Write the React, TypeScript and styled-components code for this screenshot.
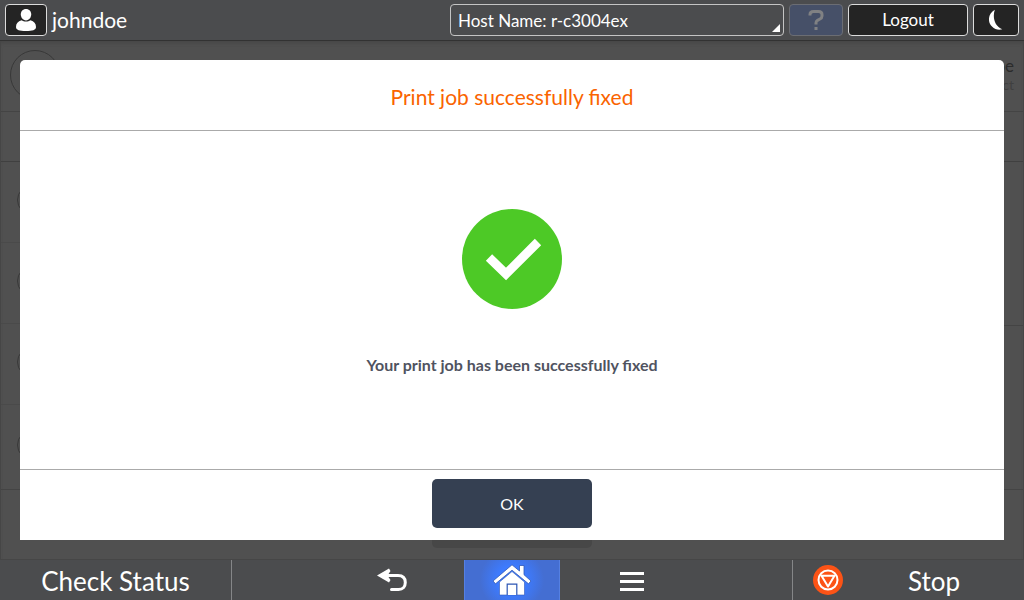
import React from 'react';
import styled, { createGlobalStyle } from 'styled-components';

const GlobalStyle = createGlobalStyle`
  *, *::before, *::after { box-sizing: border-box; }
  body {
    margin: 0;
    background: #4b4c4e;
    color: #fff;
    font-family: Lato, 'Open Sans', sans-serif;
  }
  button, select { font-family: inherit; margin: 0; }
  h1, p { margin: 0; font-weight: 400; }
`;

const Screen = styled.div`
  display: flex;
  flex-direction: column;
  min-height: 100vh;
`;

const TopBar = styled.header`
  display: flex;
  align-items: center;
  gap: 5px;
  height: 41px;
  padding: 0 5px;
  background: #4b4c4e;
  border-bottom: 1px solid #323232;
`;

const BarButton = styled.button<{ $width: number; $muted?: boolean }>`
  display: flex;
  align-items: center;
  justify-content: center;
  flex: none;
  width: ${(p) => p.$width}px;
  height: 32px;
  padding: 0;
  border: 1px solid ${(p) => (p.$muted ? '#6b6d73' : '#dcdcdc')};
  border-radius: 4px;
  background: ${(p) => (p.$muted ? '#465068' : '#242424')};
  color: #fff;
  font-size: 17px;
  line-height: 24px;
`;

const UserName = styled.span`
  flex: 1;
  font-size: 21px;
  line-height: 32px;
`;

const HostField = styled.label`
  position: relative;
  flex: none;
  width: 334px;

  &::after {
    content: '';
    position: absolute;
    right: 4px;
    bottom: 4px;
    border-style: solid;
    border-width: 0 0 8px 8px;
    border-color: transparent transparent #fff transparent;
    pointer-events: none;
  }
`;

const HostSelect = styled.select`
  display: block;
  appearance: none;
  width: 100%;
  height: 32px;
  padding: 0 7px;
  border: 1px solid #c4c4c4;
  border-radius: 4px;
  background: transparent;
  color: #fff;
  font-size: 17px;
`;

const Stage = styled.main`
  position: relative;
  display: flex;
  flex-direction: column;
  flex: 1;
  background: #505050;
  border: 1px solid #464646;
  border-top: 0;
  box-shadow: inset 0 4px 4px -2px #464646;
`;

const ProfileRow = styled.div`
  display: flex;
  justify-content: space-between;
  align-items: flex-start;
  height: 71px;
  padding: 9px;
  border-bottom: 1px solid #444;
`;

const Ring = styled.span<{ $size: number }>`
  width: ${(p) => p.$size}px;
  height: ${(p) => p.$size}px;
  border: 1px solid #383838;
  border-radius: 50%;
`;

const ProfileText = styled.div`
  display: flex;
  flex-direction: column;
  align-items: flex-end;
  padding-top: 6px;
`;

const ProfileName = styled.span`
  color: #2b2b2b;
  font-size: 17px;
  line-height: 20px;
`;

const ProfileNote = styled.span`
  color: #404040;
  font-size: 14px;
  line-height: 18px;
`;

const TabsRow = styled.div`
  height: 50px;
  border-bottom: 1px solid #404040;
`;

const Columns = styled.div`
  display: grid;
  grid-template-columns: 1fr 1fr;
  flex: 1;
  border-bottom: 1px solid #444;
`;

const Column = styled.div`
  display: flex;
  flex-direction: column;
`;

const JobRow = styled.div`
  display: flex;
  align-items: center;
  height: 81px;
  padding: 0 0 4px 16px;
  border-bottom: 1px solid #4a4a4a;

  &:last-child {
    flex: 1;
    border-bottom: 0;
  }
`;

const Detail = styled.div`
  flex: 1;

  & + & { border-top: 1px solid #444; }
`;

const ActionRow = styled.div`
  display: flex;
  justify-content: center;
  height: 69px;
  padding-top: 9px;
`;

const ActionSlot = styled.div`
  width: 160px;
  height: 49px;
  border-radius: 5px;
  background: #474747;
`;

const Dialog = styled.section`
  position: absolute;
  inset: 19px;
  display: flex;
  flex-direction: column;
  border-radius: 5px 5px 0 0;
  background: #fff;
`;

const DialogTitle = styled.h1`
  padding: 21px 20px 17px;
  border-bottom: 1px solid #aaa;
  color: #fa6400;
  font-size: 21px;
  line-height: 32px;
  text-align: center;
`;

const DialogBody = styled.div`
  display: flex;
  flex-direction: column;
  align-items: center;
  justify-content: center;
  gap: 44px;
  flex: 1;
  padding-bottom: 15px;
`;

const Message = styled.p`
  color: #50535f;
  font-size: 16px;
  font-weight: 700;
  line-height: 24px;
`;

const DialogFooter = styled.div`
  display: flex;
  justify-content: center;
  padding: 9px 20px 12px;
  border-top: 1px solid #aaa;
`;

const OkButton = styled.button`
  width: 160px;
  height: 49px;
  padding: 0;
  border: 0;
  border-radius: 5px;
  background: #354052;
  color: #fff;
  font-size: 16px;
`;

const BottomBar = styled.nav`
  display: flex;
  height: 40px;
  background: #4b4c4e;
`;

const SideButton = styled.button<{ $edge: 'left' | 'right' }>`
  display: flex;
  align-items: center;
  justify-content: ${(p) => (p.$edge === 'left' ? 'center' : 'space-between')};
  flex: none;
  width: 232px;
  padding: ${(p) => (p.$edge === 'left' ? '0' : '0 64px 0 20px')};
  border: 0 solid #858688;
  border-width: ${(p) => (p.$edge === 'left' ? '0 1px 0 0' : '0 0 0 1px')};
  background: transparent;
  color: #fff;
  font-size: 26px;
  line-height: 36px;
  white-space: nowrap;
`;

const SideLabel = styled.span`
  padding-top: 2px;
`;

const NavGroup = styled.div`
  display: flex;
  justify-content: center;
  flex: 1;
`;

const NavButton = styled.button<{ $active?: boolean }>`
  display: flex;
  align-items: center;
  justify-content: center;
  flex: ${(p) => (p.$active ? '0 0 96px' : '0 0 144px')};
  padding: 0;
  border: 0 solid #5580e2;
  border-width: ${(p) => (p.$active ? '0 1px' : '0')};
  background: ${(p) =>
    p.$active ? 'radial-gradient(circle, #3d7bff 14px, #446ed2 32px)' : 'transparent'};
`;

const UserIcon = () => (
  <svg width="22" height="24" viewBox="0 0 22 24" fill="#fff" aria-hidden="true">
    <path d="M11 1C7.800 1 5.800 3.300 5.800 6.300C5.800 9.600 7.900 12.400 11 12.400C14.100 12.400 16.200 9.600 16.200 6.300C16.200 3.300 14.200 1 11 1Z" />
    <path d="M6.500 12.200C3 13 1 15.500 1 19C1 22 4.500 23 11 23C17.500 23 21 22 21 19C21 15.500 19 13 15.500 12.200C13 14 9 14 6.500 12.200Z" />
  </svg>
);

const HelpIcon = () => (
  <svg width="18" height="22" viewBox="0 0 18 22" fill="none" stroke="#808183" strokeWidth="3" aria-hidden="true">
    <path d="M3 6.500V5.500Q3 2.500 6.500 2.500H11.500Q15 2.500 15 5.500V7Q15 9 13 10L10.500 11.300Q9 12.200 9 14V15.500M9 18V21" />
  </svg>
);

const MoonIcon = () => (
  <svg width="14" height="22" viewBox="0 0 14 22" fill="#fff" aria-hidden="true">
    <path d="M5.800 .800C-1 4.500-1.800 13 3 17.500C6 20.600 10 21.300 13.300 20.200C5.800 17.500 3.200 8.500 5.800 .800Z" />
  </svg>
);

const CheckIcon = () => (
  <svg width="100" height="100" viewBox="0 0 100 100" aria-hidden="true">
    <circle cx="50" cy="50" r="50" fill="#4dc926" />
    <path d="M27 48.500L44 65L76 33" fill="none" stroke="#fff" strokeWidth="9" />
  </svg>
);

const BackIcon = () => (
  <svg width="32" height="26" viewBox="0 0 32 26" fill="none" aria-hidden="true">
    <path d="M8 8.500H22C27 8.500 29.300 11.500 29.300 15.500S27 22.500 22.500 22.500H15.500" stroke="#fff" strokeWidth="3" strokeLinecap="round" />
    <path d="M1 8.500L13 1.500L14.500 4L11.500 8.500L14.500 13L13 15.500Z" fill="#fff" />
  </svg>
);

const HomeIcon = () => (
  <svg width="40" height="32" viewBox="0 0 40 32" aria-hidden="true">
    <path d="M7.500 31V18L20 7.500L32.500 18V31Z" fill="#fff" stroke="#2f58b8" strokeWidth=".6" />
    <path d="M15.200 31V20.200H24.800V31" fill="#fff" stroke="#2c55b4" strokeWidth="1.200" />
    <path d="M1 17L20 .800L27.500 7V1.500H32V10.700L39 17L36.500 19.800L20 6.200L3.500 19.800Z" fill="#fff" stroke="#2f58b8" strokeWidth=".8" />
  </svg>
);

const MenuIcon = () => (
  <svg width="24" height="22" viewBox="0 0 24 22" fill="#fff" aria-hidden="true">
    <path d="M0 3H24V6H0ZM0 11H24V14H0ZM0 19H24V22H0Z" />
  </svg>
);

const StopIcon = () => (
  <svg width="30" height="30" viewBox="0 0 30 30" fill="none" aria-hidden="true">
    <circle cx="15" cy="15" r="15" fill="#fc5316" />
    <circle cx="15" cy="15" r="9.500" stroke="#fff" strokeWidth="2" />
    <path d="M8.500 10.700H21.500L15 21.500Z" stroke="#fff" strokeWidth="2" strokeLinejoin="round" />
  </svg>
);

export default function App() {
  return (
    <Screen>
      <GlobalStyle />
      <TopBar>
        <BarButton $width={42} aria-label="User">
          <UserIcon />
        </BarButton>
        <UserName>johndoe</UserName>
        <HostField>
          <HostSelect aria-label="Host Name">
            <option>Host Name: r-c3004ex</option>
          </HostSelect>
        </HostField>
        <BarButton $width={54} $muted aria-label="Help">
          <HelpIcon />
        </BarButton>
        <BarButton $width={120}>Logout</BarButton>
        <BarButton $width={46} aria-label="Sleep">
          <MoonIcon />
        </BarButton>
      </TopBar>

      <Stage>
        <ProfileRow>
          <Ring $size={50} />
          <ProfileText>
            <ProfileName>oe</ProfileName>
            <ProfileNote>ct</ProfileNote>
          </ProfileText>
        </ProfileRow>
        <TabsRow />
        <Columns>
          <Column>
            {[1, 2, 3, 4].map((job) => (
              <JobRow key={job}>
                <Ring $size={30} />
              </JobRow>
            ))}
          </Column>
          <Column>
            <Detail />
            <Detail />
          </Column>
        </Columns>
        <ActionRow>
          <ActionSlot />
        </ActionRow>

        <Dialog role="dialog" aria-labelledby="dialog-title">
          <DialogTitle id="dialog-title">Print job successfully fixed</DialogTitle>
          <DialogBody>
            <CheckIcon />
            <Message>Your print job has been successfully fixed</Message>
          </DialogBody>
          <DialogFooter>
            <OkButton>OK</OkButton>
          </DialogFooter>
        </Dialog>
      </Stage>

      <BottomBar>
        <SideButton $edge="left">
          <SideLabel>Check Status</SideLabel>
        </SideButton>
        <NavGroup>
          <NavButton aria-label="Back">
            <BackIcon />
          </NavButton>
          <NavButton $active aria-label="Home">
            <HomeIcon />
          </NavButton>
          <NavButton aria-label="Menu">
            <MenuIcon />
          </NavButton>
        </NavGroup>
        <SideButton $edge="right">
          <StopIcon />
          <SideLabel>Stop</SideLabel>
        </SideButton>
      </BottomBar>
    </Screen>
  );
}
